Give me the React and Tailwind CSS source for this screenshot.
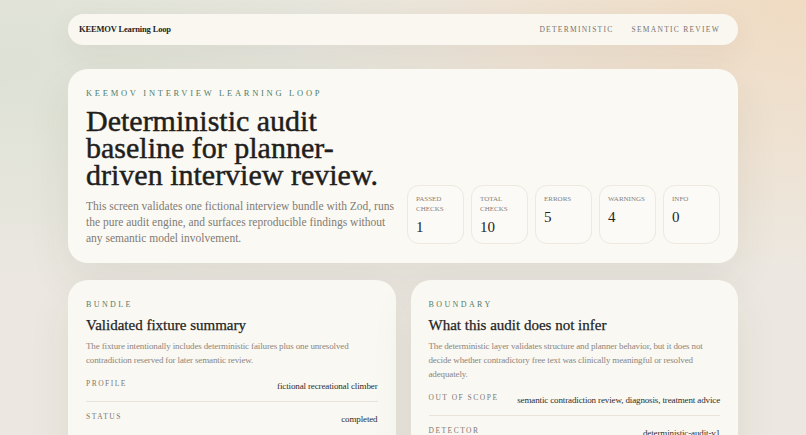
import React from 'react';

const serif = { fontFamily: '"Liberation Serif", "DejaVu Serif", serif' };

const stats = [
  { label: 'Passed checks', value: '1' },
  { label: 'Total checks', value: '10' },
  { label: 'Errors', value: '5' },
  { label: 'Warnings', value: '4' },
  { label: 'Info', value: '0' },
];

function Row({ label, value, last }) {
  return (
    <div className={`flex items-start justify-between gap-4 py-[8px] ${last ? '' : 'border-b border-[#e9e3d9]'}`}>
      <span className="pt-[1px] text-[7.5px] uppercase tracking-[0.2em] text-[#7b7872] whitespace-nowrap">{label}</span>
      <span className="pt-[3px] text-[9px] tracking-[-0.015em] text-[#2f2e2b] text-right whitespace-nowrap">{value}</span>
    </div>
  );
}

function Card({ eyebrow, title, text, rows }) {
  return (
    <div className="rounded-[20px] bg-[#faf8f3] px-[18px] pt-[19px] pb-4 shadow-[0_18px_45px_rgba(60,50,30,0.07)]">
      <div className="text-[8px] uppercase tracking-[0.3em] text-[#4f7e69]">{eyebrow}</div>
      <h2 className="mt-[5px] text-[15px] leading-[19px] text-[#24241f] [-webkit-text-stroke:0.25px_#24241f]">{title}</h2>
      <p className="mt-[4px] text-[9px] leading-[14px] tracking-[-0.015em] text-[#8a8680]">{text}</p>
      <div className="mt-[2px]">
        {rows.map((r, i) => (
          <Row key={r[0]} label={r[0]} value={r[1]} last={i === rows.length - 1} />
        ))}
      </div>
    </div>
  );
}

export default function App() {
  return (
    <div
      style={serif}
      className="min-h-screen h-[435px] overflow-hidden bg-[#ece8e1] bg-[image:radial-gradient(ellipse_at_0%_15%,#dde1d5_0%,transparent_45%),radial-gradient(ellipse_at_100%_0%,#f0dbc2_0%,transparent_45%)]"
    >
      <div className="mx-auto w-[670px] pt-[14px]">
        {/* Nav */}
        <nav className="flex h-[31px] items-center justify-between rounded-full bg-[#faf7f1] pl-[11px] pr-[18px] shadow-[0_10px_30px_rgba(60,50,30,0.06)]">
          <span className="text-[8.5px] font-bold tracking-[-0.02em] text-[#26251f]">KEEMOV Learning Loop</span>
          <div className="flex gap-[18px] text-[7.5px] uppercase tracking-[0.17em] text-[#77746e]">
            <span>Deterministic</span>
            <span>Semantic Review</span>
          </div>
        </nav>

        {/* Hero */}
        <section className="mt-[24px] flex items-end justify-between rounded-[20px] bg-[#fbf9f4] px-[18px] pt-[18px] pb-[17px] shadow-[0_18px_45px_rgba(60,50,30,0.07)]">
          <div className="w-[314px]">
            <div className="text-[8.5px] uppercase tracking-[0.32em] text-[#4f7e69]">Keemov Interview Learning Loop</div>
            <h1 className="mt-[7px] text-[30px] leading-[27px] text-[#1f201c] [-webkit-text-stroke:0.45px_#1f201c]">
              Deterministic audit<br />baseline for planner-<br />driven interview review.
            </h1>
            <p className="mt-[10px] text-[11.5px] leading-[16px] text-[#7f7b75]">
              This screen validates one fictional interview bundle with Zod, runs the pure audit engine, and surfaces reproducible findings without any semantic model involvement.
            </p>
          </div>
          <div className="mb-[2px] flex gap-[7px]">
            {stats.map((s) => (
              <div key={s.label} className="h-[59px] w-[57px] rounded-[12px] border border-[#eee8de] bg-[#fcfaf6] px-[8px] pt-[8px]">
                <div className="w-[40px] text-[7px] uppercase leading-[10px] text-[#85817b]">{s.label}</div>
                <div className="mt-[3px] text-[15px] leading-[20px] text-[#24241f]">{s.value}</div>
              </div>
            ))}
          </div>
        </section>

        {/* Cards */}
        <div className="mt-[17px] grid grid-cols-2 gap-[15px]">
          <Card
            eyebrow="Bundle"
            title="Validated fixture summary"
            text="The fixture intentionally includes deterministic failures plus one unresolved contradiction reserved for later semantic review."
            rows={[
              ['Profile', 'fictional recreational climber'],
              ['Status', 'completed'],
              ['Turns', '12'],
            ]}
          />
          <Card
            eyebrow="Boundary"
            title="What this audit does not infer"
            text="The deterministic layer validates structure and planner behavior, but it does not decide whether contradictory free text was clinically meaningful or resolved adequately."
            rows={[
              ['Out of scope', 'semantic contradiction review, diagnosis, treatment advice'],
              ['Detector', 'deterministic-audit-v1'],
            ]}
          />
        </div>
      </div>
    </div>
  );
}
